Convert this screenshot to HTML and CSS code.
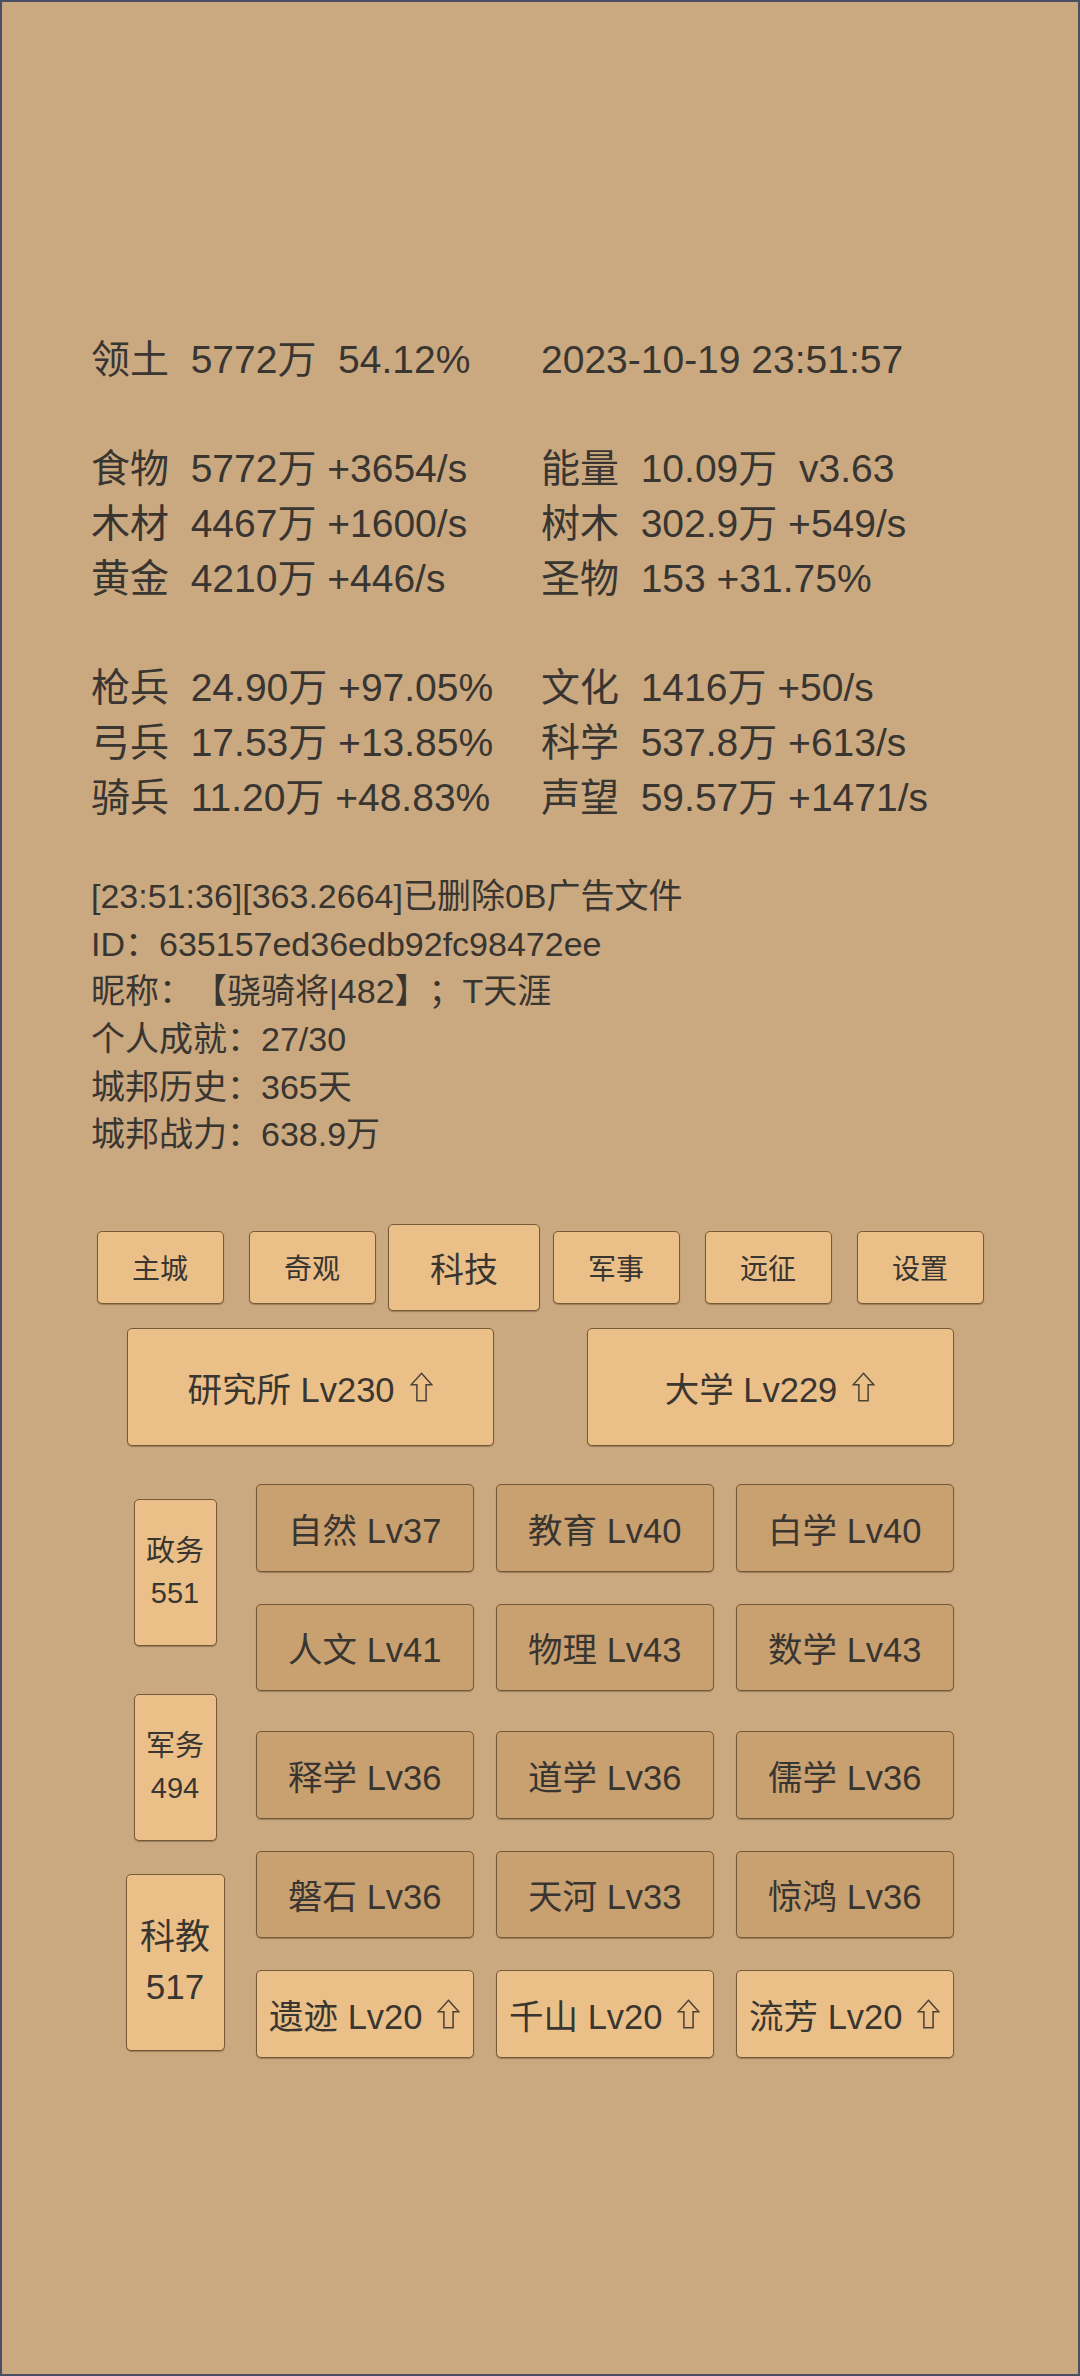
FILE: index.html
```html
<!DOCTYPE html>
<html lang="zh-CN">
<head>
<meta charset="utf-8">
<title>城邦</title>
<link rel="stylesheet" href="styles.css">
</head>
<body>
<div class="frame">
  <div class="stats">
    <div class="row"><span class="c1">领土  5772万  54.12%</span><span class="c2">2023-10-19 23:51:57</span></div>
    <div class="row"></div>
    <div class="row"><span class="c1">食物  5772万 +3654/s</span><span class="c2">能量  10.09万  v3.63</span></div>
    <div class="row"><span class="c1">木材  4467万 +1600/s</span><span class="c2">树木  302.9万 +549/s</span></div>
    <div class="row"><span class="c1">黄金  4210万 +446/s</span><span class="c2">圣物  153 +31.75%</span></div>
    <div class="row"></div>
    <div class="row"><span class="c1">枪兵  24.90万 +97.05%</span><span class="c2">文化  1416万 +50/s</span></div>
    <div class="row"><span class="c1">弓兵  17.53万 +13.85%</span><span class="c2">科学  537.8万 +613/s</span></div>
    <div class="row"><span class="c1">骑兵  11.20万 +48.83%</span><span class="c2">声望  59.57万 +1471/s</span></div>
  </div>

  <div class="log">
    <div class="line">[23:51:36][363.2664]已删除0B广告文件</div>
    <div class="line">ID：635157ed36edb92fc98472ee</div>
    <div class="line">昵称：【骁骑将|482】；T天涯</div>
    <div class="line">个人成就：27/30</div>
    <div class="line">城邦历史：365天</div>
    <div class="line">城邦战力：638.9万</div>
  </div>

  <div class="tabs">
    <div class="slot"><div class="btn tab">主城</div></div>
    <div class="slot"><div class="btn tab">奇观</div></div>
    <div class="slot"><div class="btn tab sel">科技</div></div>
    <div class="slot"><div class="btn tab">军事</div></div>
    <div class="slot"><div class="btn tab">远征</div></div>
    <div class="slot"><div class="btn tab">设置</div></div>
  </div>

  <div class="bigrow">
    <div class="cell"><div class="btn big">研究所 Lv230<svg class="up" viewBox="0 0 24 31"><path d="M12 1.2 L22.8 13.2 H16.8 V29.8 H7.2 V13.2 H1.2 Z"/></svg></div></div>
    <div class="cell"><div class="btn big">大学 Lv229<svg class="up" viewBox="0 0 24 31"><path d="M12 1.2 L22.8 13.2 H16.8 V29.8 H7.2 V13.2 H1.2 Z"/></svg></div></div>
  </div>

  <div class="main">
    <div class="side">
      <div class="sslot"><div class="btn sbtn">政务<br>551</div></div>
      <div class="sslot"><div class="btn sbtn">军务<br>494</div></div>
      <div class="sslot"><div class="btn sbtn sel">科教<br>517</div></div>
    </div>
    <div class="grid">
      <div class="grow">
        <div class="btn gbtn dark">自然 Lv37</div>
        <div class="btn gbtn dark">教育 Lv40</div>
        <div class="btn gbtn dark">白学 Lv40</div>
      </div>
      <div class="grow wide">
        <div class="btn gbtn dark">人文 Lv41</div>
        <div class="btn gbtn dark">物理 Lv43</div>
        <div class="btn gbtn dark">数学 Lv43</div>
      </div>
      <div class="grow">
        <div class="btn gbtn dark">释学 Lv36</div>
        <div class="btn gbtn dark">道学 Lv36</div>
        <div class="btn gbtn dark">儒学 Lv36</div>
      </div>
      <div class="grow">
        <div class="btn gbtn dark">磐石 Lv36</div>
        <div class="btn gbtn dark">天河 Lv33</div>
        <div class="btn gbtn dark">惊鸿 Lv36</div>
      </div>
      <div class="grow">
        <div class="btn gbtn">遗迹 Lv20<svg class="up" viewBox="0 0 24 31"><path d="M12 1.2 L22.8 13.2 H16.8 V29.8 H7.2 V13.2 H1.2 Z"/></svg></div>
        <div class="btn gbtn">千山 Lv20<svg class="up" viewBox="0 0 24 31"><path d="M12 1.2 L22.8 13.2 H16.8 V29.8 H7.2 V13.2 H1.2 Z"/></svg></div>
        <div class="btn gbtn">流芳 Lv20<svg class="up" viewBox="0 0 24 31"><path d="M12 1.2 L22.8 13.2 H16.8 V29.8 H7.2 V13.2 H1.2 Z"/></svg></div>
      </div>
    </div>
  </div>
</div>
</body>
</html>
```

FILE: styles.css
```css
html, body {
  margin: 0;
  padding: 0;
}

body {
  width: 1080px;
  height: 2376px;
  background: #caa980;
  overflow: hidden;
}

.frame {
  box-sizing: border-box;
  width: 1080px;
  height: 2376px;
  border: 2px solid #4b4d63;
  background: #caa980;
  color: #393531;
  font-family: "Liberation Sans", "Noto Sans CJK SC", sans-serif;
  text-spacing-trim: space-all;
  padding-top: 330.6px;
}

/* stats */
.stats {
  padding-left: 89px;
  font-size: 39px;
  line-height: 54.8px;
}

.row {
  display: flex;
  height: 54.8px;
}

.c1,
.c2 {
  white-space: pre;
}

.c1 {
  width: 450px;
}

/* log */
.log {
  margin-top: 47.4px;
  padding-left: 89px;
  font-size: 34px;
  line-height: 47.6px;
}

.line {
  white-space: pre;
  height: 47.6px;
}

/* buttons */
.btn {
  box-sizing: border-box;
  display: flex;
  align-items: center;
  justify-content: center;
  background: #ebc088;
  border: 1px solid #76583a;
  border-radius: 5px;
  box-shadow: 0 1px 1px rgba(70, 45, 15, 0.35);
  color: #393531;
  white-space: nowrap;
}

.btn.dark {
  background: #c9a06f;
}

.up {
  width: 23px;
  height: 30px;
  margin-left: 15px;
  fill: none;
  stroke: #4a4236;
  stroke-width: 1.6;
  stroke-linejoin: miter;
}

/* tabs */
.tabs {
  margin-top: 65px;
  height: 87px;
  display: flex;
  justify-content: center;
  align-items: center;
}

.slot {
  width: 152px;
  display: flex;
  justify-content: center;
  align-items: center;
}

.tab {
  width: 127px;
  height: 73px;
  font-size: 28px;
}

.tab.sel {
  width: 152px;
  height: 87px;
  font-size: 34px;
}

/* big buttons */
.bigrow {
  margin-top: 17.5px;
  display: flex;
  justify-content: center;
}

.cell {
  width: 460px;
  display: flex;
  justify-content: center;
}

.big {
  width: 367px;
  height: 118px;
  font-size: 34.5px;
}

/* main area */
.main {
  margin-top: 28.7px;
  display: flex;
}

.side {
  margin-left: 123px;
  width: 100px;
  display: flex;
  flex-direction: column;
}

.sslot {
  height: 195px;
  display: flex;
  align-items: center;
  justify-content: center;
}

.sbtn {
  width: 83px;
  height: 147px;
  font-size: 29px;
  line-height: 42px;
  text-align: center;
}

.sbtn.sel {
  width: 99px;
  height: 177px;
  font-size: 35px;
  line-height: 50px;
}

.grid {
  margin-left: 31px;
  padding-top: 9.3px;
  display: flex;
  flex-direction: column;
}

.grow {
  display: flex;
  gap: 22.5px;
  margin-bottom: 32px;
}

.grow.wide {
  margin-bottom: 40px;
}

.gbtn {
  width: 217.5px;
  height: 87.5px;
  font-size: 34.5px;
}
```
